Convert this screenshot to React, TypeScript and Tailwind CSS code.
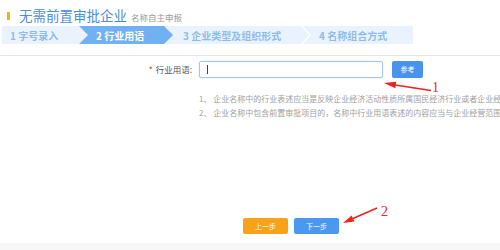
export default function App() {
  return (
    <div className="relative w-[500px] h-[250px] overflow-hidden bg-white font-['Noto_Sans_CJK_SC',sans-serif]">
      {/* title */}
      <div className="flex items-center h-[20px] mt-[6px] pl-[7px]">
        <div className="w-[3px] h-[8px] bg-[#f6b400]" />
        <span className="ml-[9px] text-[13.5px] leading-none text-[#4a8ed8]">无需前置审批企业</span>
        <span className="ml-[4px] mt-[2px] text-[8.5px] leading-none text-[#9a9a9a]">名称自主申报</span>
      </div>

      {/* steps */}
      <div className="flex ml-[2px] w-[411px] h-[18px] bg-[#eaf3fd] text-[10px] font-semibold">
        <div className="w-[77px] flex items-center pl-[8px] text-[#8fbbe8]">1 字号录入</div>
        <div className="w-[94px] flex items-center pl-[17px] text-white bg-[#72b1f1] [clip-path:polygon(0_0,85px_0,100%_50%,85px_100%,0_100%,9px_50%)]">
          2 行业用语
        </div>
        <div className="w-[128px] flex items-center pl-[10px] text-[#8fbbe8]">3 企业类型及组织形式</div>
        <svg width="10" height="18" viewBox="0 0 10 18" className="shrink-0">
          <polyline points="1,0 9,9 1,18" fill="none" stroke="#ffffff" strokeWidth="1.2" />
        </svg>
        <div className="flex-1 flex items-center pl-[8px] text-[#8fbbe8]">4 名称组合方式</div>
      </div>

      <div className="mt-[11px] h-px bg-[#e6e6e6]" />

      {/* form row */}
      <div className="flex items-center mt-[5px] h-[17px]">
        <div className="w-[192px] flex justify-end items-center text-[8.5px] text-[#555]">
          <span className="text-[#f23030] mr-[3px]">*</span>
          <span>行业用语:</span>
        </div>
        <div className="ml-[7px] w-[184px] h-[17px] border border-[#a3c6ea] rounded-[2px] flex items-center shadow-[0_0_2px_#cfe3f7]">
          <div className="ml-[7px] w-px h-[9px] bg-[#444]" />
        </div>
        <button className="ml-[9px] w-[31px] h-[17px] rounded-[2px] bg-[#4a93ec] text-white text-[7px] leading-none">
          参考
        </button>
      </div>

      {/* notes */}
      <div className="mt-[14px] pl-[199px] text-[8px] leading-[14px] text-[#a0a0a0] whitespace-nowrap">
        <p>1、 企业名称中的行业表述应当是反映企业经济活动性质所属国民经济行业或者企业经</p>
        <p>2、 企业名称中包含前置审批项目的，名称中行业用语表述的内容应当与企业经营范围</p>
      </div>

      {/* buttons */}
      <div className="flex gap-[6px] mt-[98px] pl-[243px]">
        <button className="w-[45px] h-[16px] rounded-[2px] bg-[#f8a21c] text-white text-[7px] leading-none">上一步</button>
        <button className="w-[45px] h-[16px] rounded-[2px] bg-[#4a98f0] text-white text-[7px] leading-none">下一步</button>
      </div>

      <div className="mt-[9px] h-[10px] bg-[#f7f7f8]" />

      {/* red annotations */}
      <svg className="absolute inset-0 pointer-events-none" width="500" height="250" viewBox="0 0 500 250">
        <line x1="431" y1="90.5" x2="395" y2="85" stroke="#e8251f" strokeWidth="1.6" />
        <polygon points="384,83 396.3,81.8 395.3,88.2" fill="#e8251f" />
        <text x="432" y="92" fontSize="14" fill="#e8251f" fontFamily="Liberation Serif, serif">1</text>
        <line x1="377" y1="208" x2="353" y2="218.6" stroke="#e8251f" strokeWidth="1.6" />
        <polygon points="343,223 354.4,221.4 351.6,215.6" fill="#e8251f" />
        <text x="381" y="215.5" fontSize="14" fill="#e8251f" fontFamily="Liberation Serif, serif">2</text>
      </svg>
    </div>
  );
}
